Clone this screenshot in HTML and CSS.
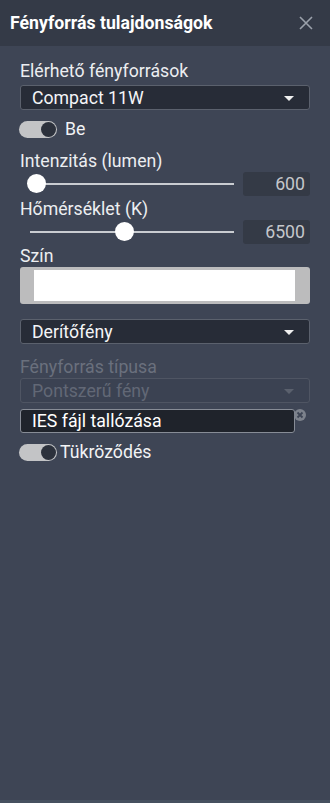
FILE: index.html
```html
<!DOCTYPE html>
<html lang="hu">
<head>
<meta charset="utf-8">
<link rel="stylesheet" href="styles.css">
</head>
<body>
<div class="panel">
  <header class="head">
    <span class="title">Fényforrás tulajdonságok</span>
    <svg class="close" width="14" height="14" viewBox="0 0 14 14"><path d="M1 1 L13 13 M13 1 L1 13" stroke="#9ba1ab" stroke-width="1.6" fill="none"/></svg>
  </header>
  <main class="content">
    <div class="label l1">Elérhető fényforrások</div>
    <div class="select s1"><span>Compact 11W</span><i class="arrow"></i></div>
    <div class="toggle-row t1"><span class="toggle"><span class="knob"></span></span><span class="tlabel">Be</span></div>
    <div class="label l2">Intenzitás (lumen)</div>
    <div class="slider-row">
      <div class="slider"><span class="track"></span><span class="thumb" style="left:7px"></span></div>
      <div class="num">600</div>
    </div>
    <div class="label l3">Hőmérséklet (K)</div>
    <div class="slider-row">
      <div class="slider"><span class="track"></span><span class="thumb" style="left:95px"></span></div>
      <div class="num">6500</div>
    </div>
    <div class="label l4">Szín</div>
    <div class="color"><span class="swatch"></span></div>
    <div class="select s2"><span>Derítőfény</span><i class="arrow"></i></div>
    <div class="label disabled l5">Fényforrás típusa</div>
    <div class="select s3 dis"><span>Pontszerű fény</span><i class="arrow"></i></div>
    <div class="file-row">
      <div class="file">IES fájl tallózása</div>
      <svg class="clear" width="12" height="12" viewBox="0 0 12 12"><circle cx="6" cy="6" r="6" fill="#7d828c"/><path d="M3.5 3.5 L8.5 8.5 M8.5 3.5 L3.5 8.5" stroke="#3e4555" stroke-width="1.8"/></svg>
    </div>
    <div class="toggle-row t2"><span class="toggle"><span class="knob"></span></span><span class="tlabel tight">Tükröződés</span></div>
  </main>
</div>
</body>
</html>
```
FILE: styles.css
```css
* { box-sizing: border-box; }
html, body { margin: 0; padding: 0; }
body {
  width: 330px;
  height: 803px;
  background: #3e4555;
  font-family: Roboto, "Noto Sans", sans-serif;
  color: #f2f3f5;
  overflow: hidden;
}
.panel {
  height: 803px;
  display: flex;
  flex-direction: column;
  border-bottom: 3px solid #46505f;
}
.head {
  height: 46px;
  flex: none;
  background: #343a47;
  display: flex;
  align-items: center;
  justify-content: space-between;
  padding: 0 17px 0 10px;
}
.title {
  font-size: 17.7px;
  font-weight: 700;
  color: #ffffff;
  line-height: 19px;
  margin-top: 1px;
}
.close { display: block; margin-top: -1px; }
.content {
  padding: 16px 20px 0 20px;
  display: flex;
  flex-direction: column;
}
.label {
  font-size: 17.7px;
  line-height: 19px;
  color: #eceef1;
}
.label.disabled { color: #6a707d; }
.select {
  height: 25px;
  border: 1px solid #5b616d;
  border-radius: 3px;
  background: #272c37;
  display: flex;
  align-items: center;
  justify-content: space-between;
  padding: 0 15px 0 11px;
  font-size: 17.7px;
  color: #f4f5f7;
}
.select.dis {
  background: #3b4252;
  border-color: #4f5563;
  color: #626876;
}
.arrow {
  width: 0; height: 0;
  border-left: 5px solid transparent;
  border-right: 5px solid transparent;
  border-top: 5px solid #f0f0f0;
  margin-top: 1px;
}
.select.dis .arrow { border-top-color: #5a606d; }
.s1 { margin-top: 4px; }
.toggle-row {
  display: flex;
  align-items: center;
  height: 18px;
}
.t1 { margin-top: 10px; }
.toggle {
  width: 38px;
  height: 17px;
  border-radius: 9px;
  background: #c3c4c6;
  position: relative;
  flex: none;
  margin-left: -1px;
}
.knob {
  position: absolute;
  right: 1px;
  top: 1px;
  width: 15px;
  height: 15px;
  border-radius: 50%;
  background: #2c313c;
}
.tlabel {
  font-size: 17.7px;
  line-height: 19px;
  margin-left: 8px;
  color: #f2f3f5;
}
.tlabel.tight { margin-left: 3px; }
.l2 { margin-top: 14px; }
.slider-row {
  display: flex;
  align-items: center;
  height: 24px;
  margin-top: 1px;
}
.slider {
  position: relative;
  width: 204px;
  height: 24px;
  margin-left: 10px;
  margin-right: 9px;
}
.track {
  position: absolute;
  left: 0; right: 0;
  top: 11px;
  height: 2px;
  background: #c9ccd1;
}
.thumb {
  position: absolute;
  top: 2px;
  width: 19px;
  height: 19px;
  border-radius: 50%;
  background: #ffffff;
  margin-left: -10px;
}
.num {
  width: 67px;
  height: 24px;
  border-radius: 3px;
  background: #343a46;
  color: #c5c7cb;
  font-size: 17.7px;
  line-height: 24px;
  text-align: right;
  padding-right: 5px;
}
.l3 { margin-top: 4px; }
.l4 { margin-top: 3px; }
.color {
  margin-top: 1px;
  height: 37px;
  border-radius: 3px;
  background: #bcbcbd;
  padding: 3px 15px 3px 14px;
}
.swatch { display: block; height: 31px; background: #ffffff; }
.s2 { margin-top: 15px; }
.l5 { margin-top: 14px; }
.s3 { margin-top: 1px; }
.file-row {
  display: flex;
  align-items: flex-start;
  margin-top: 6px;
}
.file {
  width: 275px;
  height: 24px;
  border: 1px solid #878c96;
  border-radius: 3px;
  background: #1f232b;
  font-size: 17.7px;
  line-height: 22px;
  padding-left: 11px;
  color: #ffffff;
}
.clear { margin-left: -1px; margin-top: 0px; flex: none; }
.t2 { margin-top: 10px; }
```
